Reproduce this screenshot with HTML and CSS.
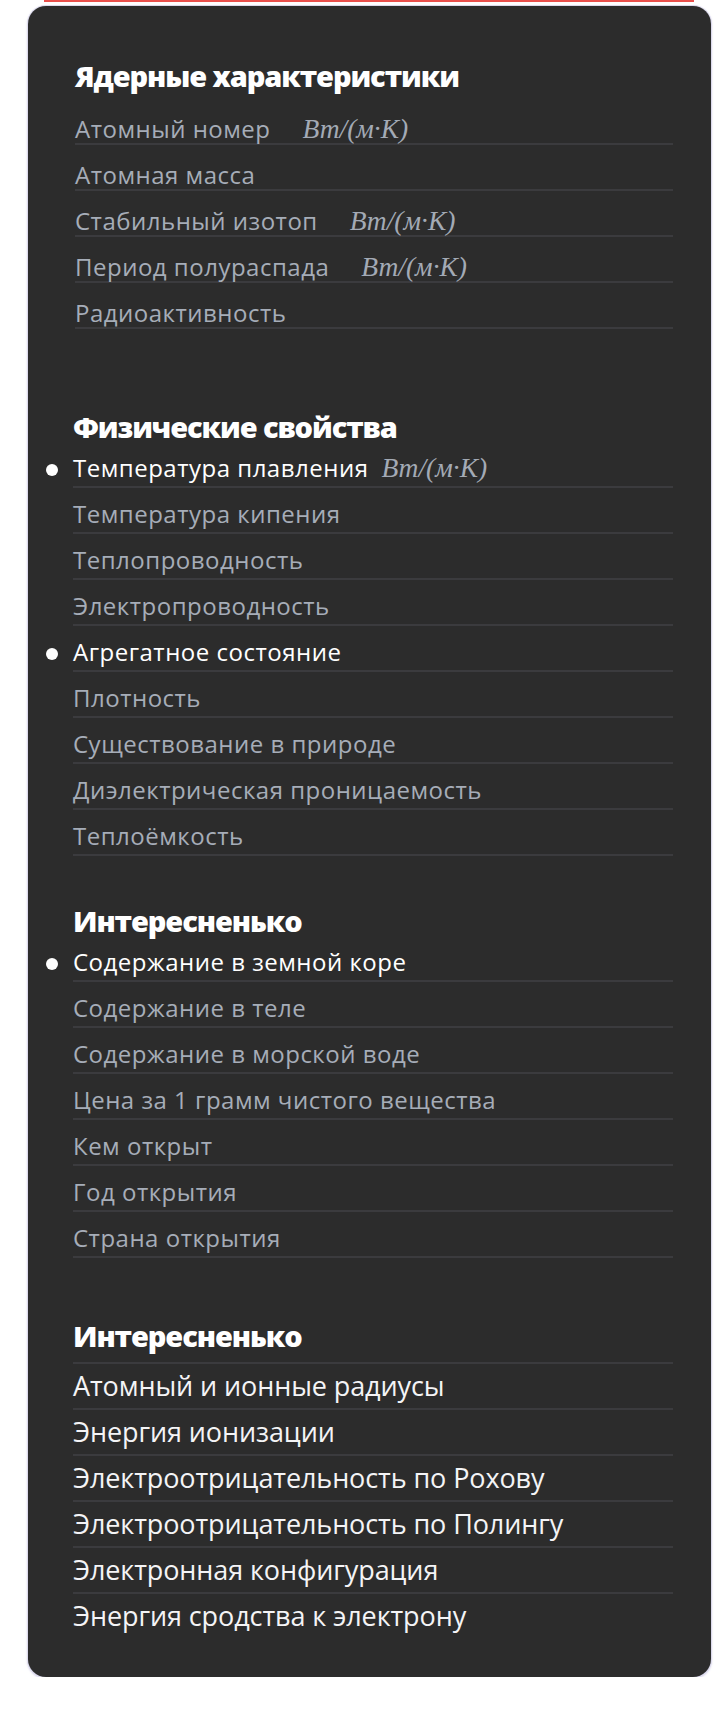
FILE: index.html
```html
<!DOCTYPE html>
<html lang="ru">
<head>
<meta charset="utf-8">
<title>Свойства элемента</title>
<link rel="stylesheet" href="styles.css">
</head>
<body>
<div class="topline"></div>
<div class="card">
  <section class="group group-first">
    <h2 class="group-title">Ядерные характеристики</h2>
    <ul class="props">
      <li class="prop"><span class="label">Атомный номер</span><span class="unit unit-wide">Вт/(м·K)</span></li>
      <li class="prop"><span class="label">Атомная масса</span></li>
      <li class="prop"><span class="label">Стабильный изотоп</span><span class="unit unit-wide">Вт/(м·K)</span></li>
      <li class="prop"><span class="label">Период полураспада</span><span class="unit unit-wide">Вт/(м·K)</span></li>
      <li class="prop"><span class="label">Радиоактивность</span></li>
    </ul>
  </section>

  <section class="group group-phys">
    <h2 class="group-title">Физические свойства</h2>
    <ul class="props">
      <li class="prop is-active"><span class="label">Температура плавления</span><span class="unit">Вт/(м·K)</span></li>
      <li class="prop"><span class="label">Температура кипения</span></li>
      <li class="prop"><span class="label">Теплопроводность</span></li>
      <li class="prop"><span class="label">Электропроводность</span></li>
      <li class="prop is-active"><span class="label">Агрегатное состояние</span></li>
      <li class="prop"><span class="label">Плотность</span></li>
      <li class="prop"><span class="label">Существование в природе</span></li>
      <li class="prop"><span class="label">Диэлектрическая проницаемость</span></li>
      <li class="prop"><span class="label">Теплоёмкость</span></li>
    </ul>
  </section>

  <section class="group group-fun">
    <h2 class="group-title">Интересненько</h2>
    <ul class="props">
      <li class="prop is-active"><span class="label">Содержание в земной коре</span></li>
      <li class="prop"><span class="label">Содержание в теле</span></li>
      <li class="prop"><span class="label">Содержание в морской воде</span></li>
      <li class="prop"><span class="label">Цена за 1 грамм чистого вещества</span></li>
      <li class="prop"><span class="label">Кем открыт</span></li>
      <li class="prop"><span class="label">Год открытия</span></li>
      <li class="prop"><span class="label">Страна открытия</span></li>
    </ul>
  </section>

  <section class="group group-last">
    <h2 class="group-title title-ruled">Интересненько</h2>
    <ul class="props props-light">
      <li class="prop"><span class="label">Атомный и ионные радиусы</span></li>
      <li class="prop"><span class="label">Энергия ионизации</span></li>
      <li class="prop"><span class="label">Электроотрицательность по Рохову</span></li>
      <li class="prop"><span class="label">Электроотрицательность по Полингу</span></li>
      <li class="prop"><span class="label">Электронная конфигурация</span></li>
      <li class="prop prop-end"><span class="label">Энергия сродства к электрону</span></li>
    </ul>
  </section>
</div>
</body>
</html>
```

FILE: styles.css
```css
* { box-sizing: border-box; }

html, body {
  margin: 0;
  padding: 0;
  background: #ffffff;
}

body {
  width: 722px;
  font-family: "Open Sans", "Noto Sans", sans-serif;
}

.topline {
  height: 2px;
  margin-left: 44px;
  width: 650px;
  background: #e9504c;
}

.card {
  margin-top: 4px;
  margin-left: 28px;
  width: 683px;
  background: #2c2c2c;
  border-radius: 18px;
  box-shadow: 0 0 0 1px #dcdaec, 0 1px 2px 1px rgba(170, 165, 215, 0.45);
  padding: 55px 38px 39px 45px;
}

.group-title {
  margin: 0;
  font-family: "Open Sans", "Noto Sans", sans-serif;
  font-weight: 800;
  font-size: 29px;
  line-height: 30px;
  color: #ffffff;
  letter-spacing: -1.1px;
}

.props {
  list-style: none;
  margin: 0;
  padding: 0;
}

.prop {
  height: 46px;
  padding-top: 13px;
  border-bottom: 2px solid #3b3b3e;
  font-size: 24px;
  line-height: 26px;
  color: #a6adb8;
  white-space: nowrap;
}

.label {
  letter-spacing: 0.5px;
}

.unit {
  font-family: "Liberation Serif", "Times New Roman", serif;
  font-style: italic;
  font-size: 27.5px;
  line-height: 0;
  color: #a3aab5;
  margin-left: 13px;
}

.unit-wide {
  margin-left: 32px;
}

.is-active {
  color: #ffffff;
}

.is-active::before {
  content: "";
  display: inline-block;
  width: 12px;
  height: 12px;
  border-radius: 50%;
  background: #ffffff;
  margin-left: -27px;
  margin-right: 15px;
  vertical-align: 1px;
}

/* section 1 */
.group-first {
  padding-left: 2px;
}
.group-first .group-title {
  margin-bottom: 8px;
}
.group-first .prop {
  padding-top: 17px;
}

/* section 2 */
.group-phys {
  margin-top: 83px;
}

/* section 3 */
.group-fun {
  margin-top: 50px;
}

/* section 4 */
.group-last {
  margin-top: 63px;
}
.title-ruled {
  padding-bottom: 11px;
  border-bottom: 2px solid #3b3b3e;
}
.props-light .prop {
  color: #f4f4f6;
  font-size: 27px;
  padding-top: 9px;
}
.props-light .label {
  letter-spacing: -0.1px;
}
.prop-end {
  border-bottom: 0;
  height: 44px;
}
```
